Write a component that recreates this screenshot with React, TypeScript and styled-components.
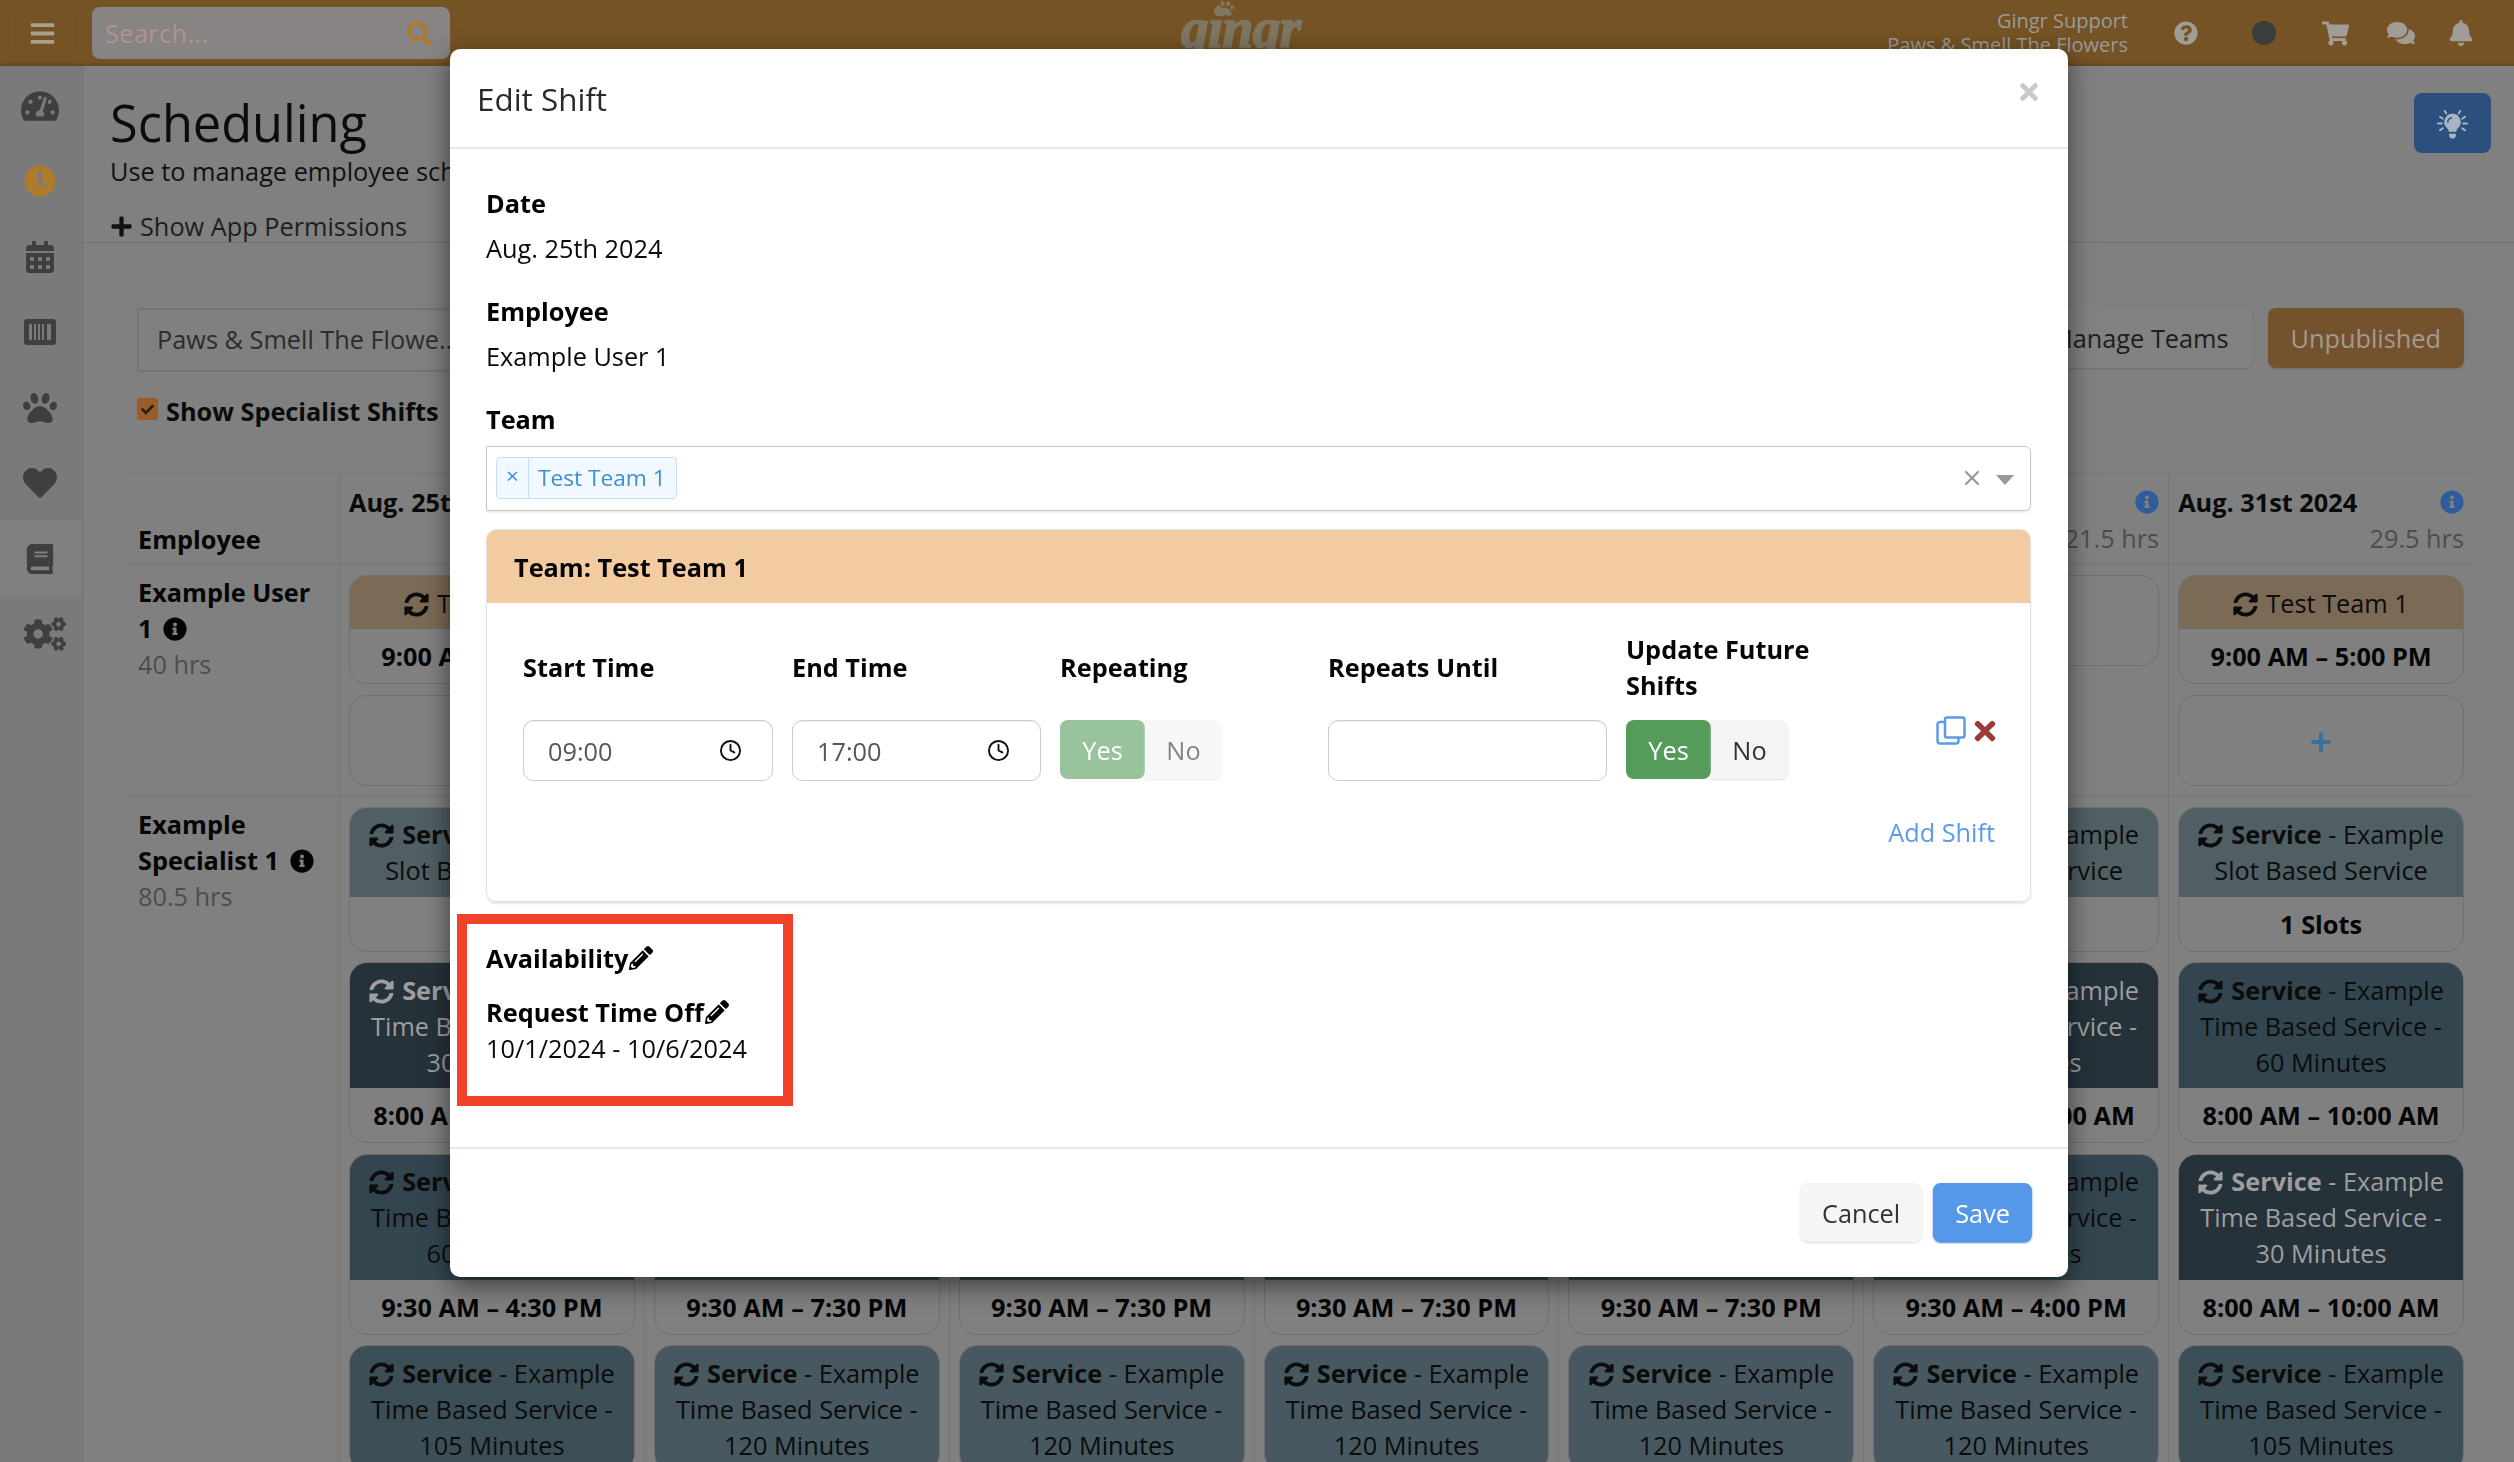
import styled, { createGlobalStyle } from "styled-components";
import {
  FaBars,
  FaBell,
  FaBook,
  FaCalendarAlt,
  FaCheck,
  FaClock,
  FaCogs,
  FaComments,
  FaHeart,
  FaInfoCircle,
  FaPaw,
  FaPencilAlt,
  FaPlus,
  FaQuestionCircle,
  FaSearch,
  FaShoppingCart,
  FaSyncAlt,
  FaTachometerAlt,
  FaTimes,
} from "react-icons/fa";
import { Clock, X } from "lucide-react";

const GlobalStyle = createGlobalStyle`
  * { box-sizing: border-box; }
  html, body { margin: 0; padding: 0; }
  body {
    width: 2514px;
    height: 1462px;
    overflow: hidden;
    background: #808080;
    font-family: "Open Sans", "Liberation Sans", sans-serif;
    font-size: 25.3px;
    line-height: 36px;
    color: #000;
  }
`;

const Page = styled.div`
  width: 2514px;
  height: 1462px;
  overflow: hidden;
  display: flex;
  flex-direction: column;
`;

/* top bar */
const TopBar = styled.header`
  flex: 0 0 66px;
  display: grid;
  grid-template-columns: 1fr auto 1fr;
  align-items: center;
  padding: 0 40px 0 9px;
  background: linear-gradient(#755324 92%, #674819);
`;

const TopLeft = styled.div`
  display: flex;
  align-items: center;
  gap: 16px;
`;

const MenuButton = styled.div`
  width: 67px;
  height: 50px;
  display: flex;
  align-items: center;
  justify-content: center;
  color: #a8a090;
  font-size: 27px;
  border: 1px solid #6f4f22;
  border-radius: 10px;
`;

const SearchBox = styled.div`
  width: 358px;
  height: 52px;
  padding: 0 18px 0 13px;
  display: flex;
  align-items: center;
  justify-content: space-between;
  background: #888483;
  border-radius: 8px;
  color: #b09290;
  letter-spacing: 0.4px;

  svg {
    color: #ad7a2d;
    font-size: 25px;
  }
`;

const Logo = styled.div`
  position: relative;
  align-self: start;
  margin: 2px 2px 0 0;
  font-family: "Liberation Serif", serif;
  font-style: italic;
  font-weight: 700;
  font-size: 56px;
  line-height: 52px;
  letter-spacing: -1px;
  color: #7f7663;
  -webkit-text-stroke: 1.5px #7f7663;

  svg {
    position: absolute;
    left: 36px;
    top: -2px;
    font-size: 17px;
  }
`;

const TopRight = styled.div`
  display: flex;
  align-items: center;
  justify-content: flex-end;
`;

const Account = styled.div`
  text-align: right;
  color: #9a9a9a;
  font-size: 20px;
  line-height: 24px;
  white-space: nowrap;
`;

const NavIcon = styled.span<{ $gap: number; $size: number }>`
  display: flex;
  margin-left: ${(p) => p.$gap}px;
  color: #a09d97;
  font-size: ${(p) => p.$size}px;
`;

const Avatar = styled.span`
  width: 24px;
  height: 24px;
  margin-left: 54px;
  border-radius: 50%;
  background: #3c3c3c;
`;

/* page body */
const Body = styled.div`
  flex: 1;
  display: flex;
  min-height: 0;
`;

const Sidebar = styled.nav`
  flex: 0 0 83px;
  padding-top: 2px;
  background: #7a7a7a;
  border-right: 1px solid #717171;
`;

const SideItem = styled.div<{ $active?: boolean; $accent?: boolean }>`
  height: 75.5px;
  padding-right: 2px;
  display: flex;
  align-items: center;
  justify-content: center;
  background: ${(p) => (p.$active ? "#808080" : "transparent")};
  color: ${(p) => (p.$accent ? "#b07a2c" : "#3f3f3f")};
`;

const CogsIcon = styled(FaCogs)`
  margin-left: 9px;
`;

const Main = styled.main`
  flex: 1;
  min-width: 0;
  background: #808080;
`;

const TitleBlock = styled.section`
  position: relative;
  height: 177px;
  padding: 27px 23px 0 27px;
  display: flex;
  justify-content: space-between;
  border-bottom: 1px solid #6f6f6f;
`;

const Title = styled.h1`
  margin: 0;
  font-size: 50.5px;
  font-weight: 400;
  line-height: 60px;
  color: #0c0c0c;
`;

const Subtitle = styled.p`
  margin: 0;
  color: #111;
  white-space: nowrap;
`;

const PermissionsLink = styled.div`
  margin-top: 19px;
  display: flex;
  align-items: center;
  gap: 7px;
  color: #1e1e1e;

  svg {
    font-size: 23px;
    color: #111;
  }
`;

const TipButton = styled.div`
  width: 77px;
  height: 60px;
  padding-top: 2px;
  display: flex;
  align-items: center;
  justify-content: center;
  background: #2d4f7d;
  border-radius: 8px;
`;

const Content = styled.section`
  padding: 65px 41px 0 45px;
`;

const FilterRow = styled.div`
  display: flex;
  justify-content: space-between;
  align-items: flex-start;
  margin-left: 9px;
  margin-right: 9px;
  height: 64px;
`;

const LocationSelect = styled.div`
  width: 420px;
  height: 64px;
  padding: 0 18px 2px;
  display: flex;
  align-items: center;
  border: 2px solid #737373;
  color: #2c2c2c;
`;

const FilterActions = styled.div`
  display: flex;
  gap: 16px;
`;

const GhostButton = styled.div<{ $tone: "plain" | "warn" }>`
  height: 60px;
  padding: 0 23px;
  display: flex;
  align-items: center;
  border-radius: 8px;
  background: ${(p) => (p.$tone === "warn" ? "#73522d" : "#828282")};
  color: ${(p) => (p.$tone === "warn" ? "#a39a90" : "#1d1d1d")};
  box-shadow: 0 1px 2px #6f6f6f;
`;

const SpecialistToggle = styled.label`
  margin: 21px 0 0 9px;
  height: 36px;
  display: flex;
  align-items: center;
  gap: 8px;
  font-weight: 700;
  color: #0b0b0b;
`;

const Tick = styled.span`
  width: 21px;
  height: 22px;
  display: flex;
  align-items: center;
  justify-content: center;
  background: #9c5c28;
  border-radius: 3px;
  color: #222;
  font-size: 13px;
  margin-top: -4px;
`;

/* schedule grid */
const Schedule = styled.div`
  margin-top: 44px;
  border-top: 1px solid #767676;
`;

const ScheduleRow = styled.div`
  display: grid;
  grid-template-columns: 211px repeat(7, 1fr);
  border-bottom: 1px solid #747474;
`;

const NameCell = styled.div<{ $bottom?: boolean }>`
  padding: ${(p) => (p.$bottom ? "47px 21px 4px 10px" : "9px 21px 0 10px")};
  font-weight: 700;
  color: #050505;
`;

const Hours = styled.div`
  font-weight: 400;
  color: #4d4d4d;
`;

const InfoDot = styled(FaInfoCircle)`
  font-size: 24px;
  vertical-align: -3px;
  margin-left: 4px;
`;

const DayHead = styled.div`
  height: 90px;
  padding: 10px 9px 0 9px;
  border-left: 1px solid #747474;
`;

const DayTop = styled.div`
  display: flex;
  justify-content: space-between;
  align-items: center;
  font-weight: 700;
  color: #0a0a0a;
  white-space: nowrap;

  svg {
    font-size: 24px;
    color: #2f5c9b;
    flex: none;
  }
`;

const DayHours = styled.div`
  text-align: right;
  color: #4d4d4d;
  white-space: nowrap;
`;

const DayCell = styled.div`
  min-width: 0;
  padding: 10px 9px;
  display: flex;
  flex-direction: column;
  gap: 10.5px;
  border-left: 1px solid #747474;
`;

const ShiftCard = styled.article`
  overflow: hidden;
  border: 1px solid #6f6f6f;
  border-radius: 18px;
`;

const ShiftHead = styled.div<{ $bg: string; $light?: boolean }>`
  padding: 8.5px 4px;
  background: ${(p) => p.$bg};
  color: ${(p) => (p.$light ? "#9e9e9e" : "#0c0c0c")};
  text-align: center;

  svg {
    font-size: 25px;
    vertical-align: -4px;
    margin-right: 8px;
  }
`;

const ShiftTime = styled.div`
  height: 54px;
  display: flex;
  align-items: center;
  justify-content: center;
  font-weight: 700;
  color: #050505;
  white-space: nowrap;
`;

const AddCard = styled.div`
  height: 91px;
  padding-top: 4px;
  display: flex;
  align-items: center;
  justify-content: center;
  border: 1px solid #6f6f6f;
  border-radius: 18px;
  color: #3a6f99;
  font-size: 22px;
`;

/* modal */
const ModalLayer = styled.div`
  position: fixed;
  left: 450px;
  top: 49px;
  z-index: 10;
`;

const Modal = styled.div`
  position: relative;
  width: 1618px;
  height: 1228px;
  display: flex;
  flex-direction: column;
  background: #fff;
  border-radius: 10px;
  box-shadow: 0 8px 26px rgba(0, 0, 0, 0.55);
`;

const ModalHead = styled.div`
  flex: 0 0 100px;
  padding: 2px 26px 0 27px;
  display: flex;
  align-items: center;
  justify-content: space-between;
  border-bottom: 2px solid #e8e8e8;
  font-size: 31.4px;
  color: #2a2a2a;

  svg {
    font-size: 26px;
    color: #c9c9c9;
    margin-top: -14px;
  }
`;

const ModalBody = styled.div`
  flex: 1;
  padding: 36px 37px 0 36px;
`;

const FieldLabel = styled.div<{ $top?: number }>`
  margin-top: ${(p) => p.$top ?? 0}px;
  font-weight: 700;
  color: #000;

  svg {
    font-size: 24px;
    vertical-align: -2px;
    margin-left: 1px;
  }
`;

const FieldValue = styled.div<{ $top?: number }>`
  margin-top: ${(p) => p.$top ?? 9}px;
  color: #0a0a0a;
`;

const TeamSelect = styled.div`
  margin-top: 9px;
  height: 65px;
  padding: 0 16px 2px 9px;
  display: flex;
  align-items: center;
  border: 1.5px solid #c8c8c8;
  border-radius: 0 6px 6px 0;
  box-shadow: 0 2px 2px #eee;
`;

const TeamTag = styled.div`
  height: 42px;
  display: flex;
  align-items: center;
  background: #f1f8ff;
  border: 1px solid #c6e1f7;
  border-radius: 4px;
  color: #3c8fd2;
  font-size: 22.7px;
`;

const TagRemove = styled.span`
  width: 32px;
  height: 100%;
  display: flex;
  align-items: center;
  justify-content: center;
  border-right: 1px solid #c6e1f7;
  padding-bottom: 3px;
`;

const TagLabel = styled.span`
  padding: 0 10px 0 9px;
`;

const SelectTools = styled.div`
  margin-left: auto;
  display: flex;
  align-items: center;
  gap: 12px;
  color: #999;
`;

const Caret = styled.span`
  width: 0;
  height: 0;
  margin-top: 4px;
  border-left: 9px solid transparent;
  border-right: 9px solid transparent;
  border-top: 10px solid #999;
`;

const TeamPanel = styled.div`
  margin-top: 18px;
  height: 373px;
  border: 1px solid #e3e3e3;
  border-radius: 10px;
  box-shadow: 0 2px 2px #e6e6e6;
  overflow: hidden;
`;

const TeamPanelHead = styled.div`
  height: 73px;
  padding: 0 27px;
  display: flex;
  align-items: center;
  background: #f3cba0;
  font-weight: 700;
  color: #050505;
`;

const ShiftForm = styled.div`
  padding: 28px 35px 0 36px;
`;

const FormGrid = styled.div`
  display: grid;
  grid-template-columns: 269px 268px 268px 298px 1fr;
  grid-template-rows: 72px auto;
  row-gap: 17px;
`;

const FormLabel = styled.div`
  align-self: center;
  font-weight: 700;
  color: #050505;
  padding-right: 170px;
`;

const PlainLabel = styled(FormLabel)`
  padding-right: 0;
`;

const TextInput = styled.div`
  width: calc(100% - 19px);
  height: 61px;
  padding: 0 30px 0 24px;
  display: flex;
  align-items: center;
  justify-content: space-between;
  border: 1.5px solid #ccc;
  border-radius: 10px;
  color: #555;
  box-shadow: inset 0 1px 1px #eee;
`;

const LastCell = styled.div`
  display: flex;
  justify-content: space-between;
  align-items: flex-start;
`;

const Toggle = styled.div<{ $muted?: boolean }>`
  display: flex;
  height: 59px;
  opacity: ${(p) => (p.$muted ? 0.6 : 1)};
`;

const ToggleYes = styled.div`
  width: 85px;
  display: flex;
  align-items: center;
  justify-content: center;
  background: #559c5b;
  color: #fff;
  border-radius: 8px;
`;

const ToggleNo = styled.div`
  width: 77px;
  display: flex;
  align-items: center;
  justify-content: center;
  background: #f4f4f4;
  color: #333;
  border-radius: 0 8px 8px 0;
  box-shadow: 0 1px 2px #ddd;
`;

const RowTools = styled.div`
  display: flex;
  gap: 4px;
  margin: -4px -5px 0 0;
  align-items: flex-start;
`;

const AddShift = styled.div`
  margin-top: 33px;
  text-align: right;
  color: #5a9bea;
`;

const ModalFoot = styled.div`
  flex: 0 0 130px;
  padding: 34px 36px 0 0;
  display: flex;
  justify-content: flex-end;
  gap: 11px;
  border-top: 2px solid #e8e8e8;
`;

const FootButton = styled.div<{ $primary?: boolean }>`
  height: 59px;
  padding: 0 22px;
  display: flex;
  align-items: center;
  border-radius: 8px;
  background: ${(p) => (p.$primary ? "#5597e8" : "#f5f5f5")};
  color: ${(p) => (p.$primary ? "#fff" : "#333")};
  box-shadow: 0 1px 2px ${(p) => (p.$primary ? "#4a86d0" : "#ddd")};
`;

/* the red marker drawn over the screenshot */
const Callout = styled.div`
  position: absolute;
  left: 7px;
  top: 865px;
  width: 336px;
  height: 192px;
  border: 10px solid #ef4228;
  pointer-events: none;
`;

const BarcodeIcon = () => (
  <svg width="32" height="26" viewBox="0 0 32 26">
    <rect width="32" height="26" rx="3" fill="#3f3f3f" />
    <g fill="#7a7a7a">
      <rect x="5" y="5" width="3" height="16" />
      <rect x="10" y="5" width="2" height="16" />
      <rect x="14" y="5" width="2" height="16" />
      <rect x="18" y="5" width="2" height="16" />
      <rect x="23" y="5" width="4" height="16" />
    </g>
  </svg>
);

const BulbIcon = () => (
  <svg width="31" height="31" viewBox="0 1 32 32" fill="none">
    <path
      d="M16 6a8.500 8.500 0 0 0-5.600 14.900c1.200 1.100 1.600 2.500 1.800 3.600h7.600c.2-1.100.6-2.500 1.800-3.600A8.500 8.500 0 0 0 16 6z"
      fill="#a9b4c2"
    />
    <path d="M12.500 26.500h7v2c0 1.500-1.500 3-3.500 3s-3.500-1.500-3.500-3z" fill="#a9b4c2" />
    <path d="M15.500 10a5 5 0 0 0-4.500 5" stroke="#2d4f7d" strokeWidth="1.600" />
    <path
      d="M3 9l3 2M29 9l-3 2M1 16h4M27 16h4M3 23l3-2M29 23l-3-2M8 3l1.500 2.500M24 3l-1.500 2.500"
      stroke="#a9b4c2"
      strokeWidth="2"
      strokeLinecap="round"
    />
  </svg>
);

const CopyIcon = () => (
  <svg width="30" height="29" viewBox="0 0 30 29" fill="none" stroke="#5a9bea" strokeWidth="2.500">
    <rect x="9" y="1.500" width="19.500" height="20" rx="2" />
    <path d="M9 6H4a2.500 2.500 0 0 0-2.500 2.500V25A2.500 2.500 0 0 0 4 27.500h16a2.500 2.500 0 0 0 2.500-2.500v-3.500" />
  </svg>
);

interface Shift {
  service: string;
  lines: string[];
  bg: string;
  light?: boolean;
  time: string;
}

const SLOT = "#4f5f64";
const DARK = "#25323a";
const MID = "#33464f";
const TALL = "#3c4f57";
const LONG = "#475860";

const slotShift: Shift = {
  service: "Example",
  lines: ["Slot Based Service"],
  bg: SLOT,
  time: "1 Slots",
};

const timed = (minutes: number, bg: string, time: string, light?: boolean): Shift => ({
  service: "Example",
  lines: ["Time Based Service -", `${minutes} Minutes`],
  bg,
  time,
  light,
});

const days = [
  { date: "Aug. 25th 2024", hours: "29.5 hrs", team: true },
  { date: "Aug. 26th 2024", hours: "21.5 hrs", team: true },
  { date: "Aug. 27th 2024", hours: "21.5 hrs", team: true },
  { date: "Aug. 28th 2024", hours: "21.5 hrs", team: true },
  { date: "Aug. 29th 2024", hours: "21.5 hrs", team: true },
  { date: "Aug. 30th 2024", hours: "21.5 hrs", team: false },
  { date: "Aug. 31st 2024", hours: "29.5 hrs", team: true },
];

const shifts: Shift[][] = [
  [
    slotShift,
    timed(30, DARK, "8:00 AM – 10:00 AM", true),
    timed(60, MID, "9:30 AM – 4:30 PM"),
    timed(105, TALL, ""),
  ],
  [
    slotShift,
    timed(30, DARK, "8:00 AM – 10:00 AM", true),
    timed(60, MID, "9:30 AM – 7:30 PM"),
    timed(120, LONG, ""),
  ],
  [
    slotShift,
    timed(30, DARK, "8:00 AM – 10:00 AM", true),
    timed(60, MID, "9:30 AM – 7:30 PM"),
    timed(120, LONG, ""),
  ],
  [
    slotShift,
    timed(30, DARK, "8:00 AM – 10:00 AM", true),
    timed(60, MID, "9:30 AM – 7:30 PM"),
    timed(120, LONG, ""),
  ],
  [
    slotShift,
    timed(30, DARK, "8:00 AM – 10:00 AM", true),
    timed(60, MID, "9:30 AM – 7:30 PM"),
    timed(120, LONG, ""),
  ],
  [
    slotShift,
    timed(30, DARK, "8:00 AM – 10:00 AM", true),
    timed(60, MID, "9:30 AM – 4:00 PM"),
    timed(120, LONG, ""),
  ],
  [
    slotShift,
    timed(60, MID, "8:00 AM – 10:00 AM"),
    timed(30, DARK, "8:00 AM – 10:00 AM", true),
    timed(105, TALL, ""),
  ],
];

const ShiftBlock = ({ shift }: { shift: Shift }) => (
  <ShiftCard>
    <ShiftHead $bg={shift.bg} $light={shift.light}>
      <FaSyncAlt />
      <b>Service</b> - {shift.service}
      {shift.lines.map((line) => (
        <div key={line}>{line}</div>
      ))}
    </ShiftHead>
    {shift.time && <ShiftTime>{shift.time}</ShiftTime>}
  </ShiftCard>
);

const App = () => {
  return (
    <Page>
      <GlobalStyle />
      <TopBar>
        <TopLeft>
          <MenuButton>
            <FaBars />
          </MenuButton>
          <SearchBox>
            Search...
            <FaSearch />
          </SearchBox>
        </TopLeft>
        <Logo>
          <FaPaw />
          gingr
        </Logo>
        <TopRight>
          <Account>
            Gingr Support
            <br />
            Paws &amp; Smell The Flowers
          </Account>
          <NavIcon $gap={46} $size={24}>
            <FaQuestionCircle />
          </NavIcon>
          <Avatar />
          <NavIcon $gap={46} $size={27}>
            <FaShoppingCart />
          </NavIcon>
          <NavIcon $gap={38} $size={28}>
            <FaComments />
          </NavIcon>
          <NavIcon $gap={33} $size={26}>
            <FaBell />
          </NavIcon>
        </TopRight>
      </TopBar>

      <Body>
        <Sidebar>
          <SideItem>
            <FaTachometerAlt size={38} />
          </SideItem>
          <SideItem $accent>
            <FaClock size={32} />
          </SideItem>
          <SideItem>
            <FaCalendarAlt size={32} />
          </SideItem>
          <SideItem>
            <BarcodeIcon />
          </SideItem>
          <SideItem>
            <FaPaw size={34} />
          </SideItem>
          <SideItem>
            <FaHeart size={34} />
          </SideItem>
          <SideItem $active>
            <FaBook size={30} />
          </SideItem>
          <SideItem>
            <CogsIcon size={42} />
          </SideItem>
        </Sidebar>

        <Main>
          <TitleBlock>
            <div>
              <Title>Scheduling</Title>
              <Subtitle>Use to manage employee schedules</Subtitle>
              <PermissionsLink>
                <FaPlus />
                Show App Permissions
              </PermissionsLink>
            </div>
            <TipButton>
              <BulbIcon />
            </TipButton>
          </TitleBlock>

          <Content>
            <FilterRow>
              <LocationSelect>Paws &amp; Smell The Flowe...</LocationSelect>
              <FilterActions>
                <GhostButton $tone="plain">Manage Teams</GhostButton>
                <GhostButton $tone="warn">Unpublished</GhostButton>
              </FilterActions>
            </FilterRow>
            <SpecialistToggle>
              <Tick>
                <FaCheck />
              </Tick>
              Show Specialist Shifts
            </SpecialistToggle>

            <Schedule>
              <ScheduleRow>
                <NameCell $bottom>Employee</NameCell>
                {days.map((day) => (
                  <DayHead key={day.date}>
                    <DayTop>
                      {day.date}
                      <FaInfoCircle />
                    </DayTop>
                    <DayHours>{day.hours}</DayHours>
                  </DayHead>
                ))}
              </ScheduleRow>

              <ScheduleRow>
                <NameCell>
                  Example User 1 <InfoDot />
                  <Hours>40 hrs</Hours>
                </NameCell>
                {days.map((day) => (
                  <DayCell key={day.date}>
                    {day.team && (
                      <ShiftCard>
                        <ShiftHead $bg="#7b6a55">
                          <FaSyncAlt />
                          Test Team 1
                        </ShiftHead>
                        <ShiftTime>9:00 AM – 5:00 PM</ShiftTime>
                      </ShiftCard>
                    )}
                    <AddCard>
                      <FaPlus />
                    </AddCard>
                  </DayCell>
                ))}
              </ScheduleRow>

              <ScheduleRow>
                <NameCell>
                  Example Specialist 1 <InfoDot />
                  <Hours>80.5 hrs</Hours>
                </NameCell>
                {shifts.map((column, i) => (
                  <DayCell key={days[i].date}>
                    {column.map((shift, j) => (
                      <ShiftBlock key={j} shift={shift} />
                    ))}
                  </DayCell>
                ))}
              </ScheduleRow>
            </Schedule>
          </Content>
        </Main>
      </Body>

      <ModalLayer>
        <Modal>
          <ModalHead>
            Edit Shift
            <FaTimes />
          </ModalHead>
          <ModalBody>
            <FieldLabel>Date</FieldLabel>
            <FieldValue>Aug. 25th 2024</FieldValue>
            <FieldLabel $top={27}>Employee</FieldLabel>
            <FieldValue>Example User 1</FieldValue>
            <FieldLabel $top={27}>Team</FieldLabel>
            <TeamSelect>
              <TeamTag>
                <TagRemove>×</TagRemove>
                <TagLabel>Test Team 1</TagLabel>
              </TeamTag>
              <SelectTools>
                <X size={24} strokeWidth={2.2} />
                <Caret />
              </SelectTools>
            </TeamSelect>

            <TeamPanel>
              <TeamPanelHead>Team: Test Team 1</TeamPanelHead>
              <ShiftForm>
                <FormGrid>
                  <PlainLabel>Start Time</PlainLabel>
                  <PlainLabel>End Time</PlainLabel>
                  <PlainLabel>Repeating</PlainLabel>
                  <PlainLabel>Repeats Until</PlainLabel>
                  <FormLabel>Update Future Shifts</FormLabel>
                  <TextInput>
                    09:00
                    <Clock size={23} color="#111" />
                  </TextInput>
                  <TextInput>
                    17:00
                    <Clock size={23} color="#111" />
                  </TextInput>
                  <Toggle $muted>
                    <ToggleYes>Yes</ToggleYes>
                    <ToggleNo>No</ToggleNo>
                  </Toggle>
                  <TextInput />
                  <LastCell>
                    <Toggle>
                      <ToggleYes>Yes</ToggleYes>
                      <ToggleNo>No</ToggleNo>
                    </Toggle>
                    <RowTools>
                      <CopyIcon />
                      <FaTimes size={30} color="#9c3b36" />
                    </RowTools>
                  </LastCell>
                </FormGrid>
                <AddShift>Add Shift</AddShift>
              </ShiftForm>
            </TeamPanel>

            <FieldLabel $top={38}>
              Availability
              <FaPencilAlt />
            </FieldLabel>
            <FieldLabel $top={18}>
              Request Time Off
              <FaPencilAlt />
            </FieldLabel>
            <FieldValue $top={0}>10/1/2024 - 10/6/2024</FieldValue>
          </ModalBody>
          <ModalFoot>
            <FootButton>Cancel</FootButton>
            <FootButton $primary>Save</FootButton>
          </ModalFoot>
          <Callout />
        </Modal>
      </ModalLayer>
    </Page>
  );
};

export default App;
